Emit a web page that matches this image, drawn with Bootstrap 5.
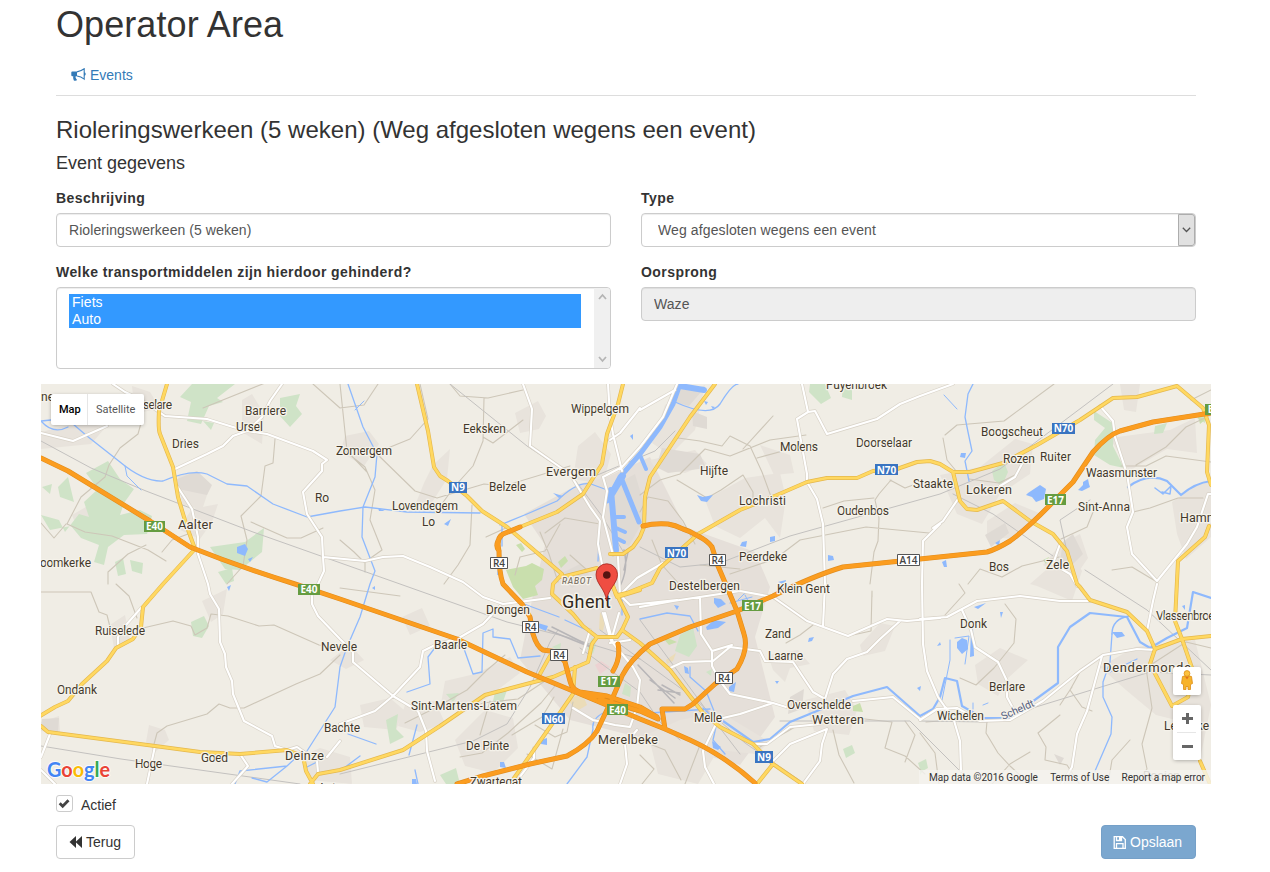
<!DOCTYPE html>
<html lang="nl">
<head>
<meta charset="utf-8">
<meta name="viewport" content="width=device-width, initial-scale=1">
<title>Operator Area</title>
<link href="https://cdn.jsdelivr.net/npm/bootstrap@5.3.0/dist/css/bootstrap.min.css" rel="stylesheet">
<style>
body{font-family:"Liberation Sans",Arial,sans-serif;font-size:14px;line-height:20px;color:#333;background:#fff;padding-right:18px;overflow:hidden}
.page{width:1170px;max-width:none;padding:0 15px}
h1,h2,h3{font-weight:400;line-height:1.1;margin:0}
h1{font-size:36px;padding-top:5px;height:55px;letter-spacing:.08px}
h2{font-size:24px;padding-top:21px;height:57px}
h3{font-size:18px;height:35px;padding-top:1px}
.nav-tabs{border-bottom:1px solid #ddd;height:41px}
.nav-tabs .nav-link{color:#337ab7;padding:10px 15px;border:0;line-height:20px}
.gx-wide{--bs-gutter-x:30px}
.form-label{font-weight:700;margin:0 0 5px;display:block;letter-spacing:.43px}
.field{margin-bottom:15px}
.form-control,.form-select{font-size:14px;line-height:20px;height:34px;color:#555;padding:6px 12px;border:1px solid #ccc;border-radius:4px;box-shadow:inset 0 1px 1px rgba(0,0,0,.075);letter-spacing:.07px}
.form-control:disabled{background:#eee;opacity:1}
.form-select{background-image:none;padding:6px 16px;letter-spacing:.11px}
.arrow{right:1px;top:1px;width:17px;height:32px;background:#e1e1e1;border:1px solid #adadad;border-radius:0 3px 3px 0}
.listbox{height:82px;padding:0;overflow:hidden}
.options{margin:6px 13px 0 12px;flex:1}
.options div{background:#39f;color:#fff;height:17px;line-height:17px;padding-left:3px}
.scrollbar{width:16px;background:#f0f0f0;padding:5px 0}
.map{height:400px;margin:0 -15px;background:#f0ede5;overflow:hidden}
.map>svg{display:block}
.road path{fill:none;stroke-linejoin:round;stroke-linecap:round}
.lbl text{font-family:Roboto,sans-serif;font-size:12px;fill:#43392c;stroke:#f5f2ea;stroke-width:2.5px;stroke-linejoin:round;paint-order:stroke}
.shield text{font:700 10px "Open Sans",sans-serif;text-anchor:middle;fill:#fff}
.shield .ring{fill:#444;font-weight:600}
.logo text{font-family:Lato,sans-serif;font-weight:700;font-size:20.5px;stroke:#fff;stroke-opacity:.75;stroke-width:2px;paint-order:stroke}
.mapctl{background:#fff;border-radius:2px;box-shadow:0 1px 4px -1px rgba(0,0,0,.4);font-family:Roboto,sans-serif;font-size:11px}
.maptype{left:10px;top:10px;height:31px;line-height:31px}
.maptype .on{width:37px;color:#000;font-weight:500;border-right:1px solid #e6e6e6;padding:0 0 0 8px}
.maptype .off{width:56px;color:#565656;padding:0 0 0 8px}
.pegman{left:1132px;top:283px;width:28px;height:28px}
.zoomer{left:1132px;top:321px;width:28px;height:55px}
.credits{right:0;bottom:0;height:14px;background:rgba(245,243,239,.78);font:10px/16px Roboto,sans-serif;color:#333;padding:0 6px;width:292px;white-space:nowrap}
.active-row{height:41px;padding-top:11px}
.active-row .form-check-input{width:17px;height:17px;margin:0 8px 0 0;border:1px solid #ccc;border-radius:3px;background:#fff url("data:image/svg+xml,%3Csvg xmlns='http://www.w3.org/2000/svg' viewBox='0 0 17 17'%3E%3Cpath d='M3.700 8.300l3 3 5.800-6' fill='none' stroke='%23444' stroke-width='2.800'/%3E%3C/svg%3E") center/17px no-repeat}
.btn{font-size:14px;line-height:20px;padding:6px 12px;height:34px;border-radius:4px;display:flex;align-items:center;gap:3px}
.btn-back{border:1px solid #ccc;background:#fff;color:#333;width:79px}
.btn-save,.btn-save:disabled{background:#7ba7cf;border:1px solid #75a0c8;color:#fff;opacity:1;width:95px;padding-left:11px}
</style>
</head>
<body>
<div class="container page">
<h1>Operator Area</h1>
<ul class="nav nav-tabs">
<li class="nav-item"><a class="nav-link d-flex align-items-center" href="#"><svg width="15" height="14" viewBox="0 0 15 14" class="me-1" aria-hidden="true"><path d="M.3 4.500Q.3 3.500 1.300 3.500H6v4.800H4.700c-.6 1.200.4 2.500 1.400 3.800-.7 1-2.500.9-3.200.4-.5-1.300-1-2.600-.6-4.200h-1Q.3 8.300.3 7.300z" fill="#337ab7"/><path d="M6 3.900C9 3.600 11.500 2 13.200.8v10.400C11.500 9.800 9 8.400 6 8M13.400 4.700q1.500 1.200 0 2.600" fill="none" stroke="#337ab7" stroke-width="1.100"/></svg>Events</a></li>
</ul>
<h2>Rioleringswerkeen (5 weken) (Weg afgesloten wegens een event)</h2>
<h3>Event gegevens</h3>
<div class="row gx-wide">
<div class="col-6">
<div class="field"><label class="form-label" for="desc">Beschrijving</label><input id="desc" class="form-control" value="Rioleringswerkeen (5 weken)"></div>
<div class="field"><span class="form-label">Welke transportmiddelen zijn hierdoor gehinderd?</span>
<div class="form-control listbox d-flex" role="listbox"><div class="options"><div>Fiets</div><div>Auto</div></div>
<div class="scrollbar d-flex flex-column justify-content-between align-items-center"><svg width="9" height="7"><path d="M1 6l3.500-4L8 6" fill="none" stroke="#b5b5b5" stroke-width="1.800"/></svg><svg width="9" height="7"><path d="M1 1l3.500 4L8 1" fill="none" stroke="#b5b5b5" stroke-width="1.800"/></svg></div></div></div>
</div>
<div class="col-6">
<div class="field"><label class="form-label" for="type">Type</label><div class="position-relative"><select id="type" class="form-select"><option>Weg afgesloten wegens een event</option></select><span class="arrow position-absolute d-flex align-items-center justify-content-center pe-none"><svg width="9" height="6"><path d="M.8.8l3.700 3.700L8.200.8" fill="none" stroke="#555" stroke-width="1.300"/></svg></span></div></div>
<div class="field"><label class="form-label" for="src">Oorsprong</label><input id="src" class="form-control" value="Waze" disabled></div>
</div>
</div>
<div class="map position-relative">
<svg width="1170" height="400" viewBox="41 384 1170 400">
<!-- built-up areas -->
<g fill="#e8e3dc">
<path d="M41 432l40-10 25 5-15 17-50 5zM132 386l18 6 10 16-25 6zM178 475l18-3 14 14-8 24-20-6zM192 509l26-5-6 18-12 17-22-10zM242 400l10-6 12 20-2 30-20-12zM345 436l24-5 10 13-15 22-24-14zM433 465l17-16-3 30-18 28-13-4 8-20zM515 413l23-12 8 15-7 13-19 4zM578 446l17-14 16 22-8 30-30-5z"/>
<path fill="#e5dfd9" d="M524 514l55-30 28-7 43-20 35 70 70 25 15 35-15 50 20 80-35 48-70-20-100-25-50-60 15-75 10-40z"/>
<path d="M705 500l40-22 35-5 6 25-6 40-15-20-25 20-25-12zM665 405l40-20-10 45-25 25-18-12zM650 460l45-10 12 14-22 9-30-5z"/>
<path d="M940 475l40-8 35-28 18 5-3 30-30 20-18 30-25-10zM987 521l28-18 24 10-22 26-30-2zM1110 438l60-8 25-12 2 35-30-4-38 22zM1172 502l30-20 9 0v55l-25 22-9-25zM1060 545l20-11 8 24-15 22-30-15zM1030 584l40-35 12 22-10 30-35-15zM1120 384l20 0-4 28-12-2z"/>
<path d="M975 665l25-17 28 12-20 18-10 18-20-12zM1100 667l35-20 60-7 16 65-10 50-25-35-20-5-30-25zM860 645l20-22 15 3-10 25-22 5zM768 655l30-5 12 14-20 4-5 14-12-12zM805 700l40-10 12 20-8 25-35-4zM680 720l40-8 50 30-14 12-38-4-20 34-40-10-10-40zM405 705l30-4 10 22-25 9-22-6zM455 740l30-30 28 8 5 30-25 25-28-7zM360 705l30-7 14 12-8 20-32-3zM300 757l20-9 30 9 2 27-42-4zM41 722l18-6 1 17-19-2zM110 625l15-10 5 25-16 8zM202 601l25-12-4 25-12 8zM149 725l16 5 4 10-14 12-9-10zM72 515l26-15 14 8-10 12-25 8zM445 681l30-7 35-17 10 16-40 30-40 6zM402 617l20-9 8 18-20 9zM330 660l20-15 14 15-18 9zM760 445l30 10 4 18-20 2z"/>
</g>
<g fill="#dfdad4"><path d="M177 479l20-8 15 14-5 10-29-6zM679 388l22 4-12 14-18-5zM692 411l15 6v12l-14-3zM662 448l38 6 6 14-38 5-12-6zM985 535l20-12 4 10-18 14zM1063 542l10-8 10 20-15 15-8-8zM560 574l20-10 10 12-18 12zM790 697l14-8-2 20-14 5zM42 719l17-1-1 13-17-2zM610 488l25-14 12 40-18 32-14-6zM1054 754l10 4-4 7z"/></g>
<!-- parks and woods -->
<g fill="#cfe3c7">
<path d="M192 384h43l-18 14 6 4-14 4-8 18-14-3 4-19-11-5zM280 398l20-4-4 12 6 8-12 13-10-11zM203 421l11 2-3 7zM41 515l18 5 6 12 14-18 10 3-5-15 14-13-12-16 22-12 12 18 14 10-10 14-4 12 20-5 12 6-5 18-23 1-16 12-4 18-10-3 5-17-18-7-10-12-21 4zM58 487l10-10 6 25-14-5zM210 547l35-5 19-14-2 24-22 18-15-1zM42 487l10-3-2 10zM115 562l8-4 3 16-8 2zM130 560l13 3-1 11-10-3zM195 620l10 10-6 4zM218 572l14-4 2 13-8 3z"/>
<path d="M810 384h15l6 14-10 6-12-12zM843 384h9v16l-10-3zM1094 411l20 13-1 22 11 22-14-3-16-10 1-15 10-12-11-8zM992 471l12-9 4 10-6 14-8-6zM1155 426l12-3-4 10-9 1zM1197 418l8-2v7zM680 635l13-8 4 19-8 11-14-6zM386 720l12-6-2 15 8 8-14 7zM193 622l10-3 4 10-9 5zM446 694l13-1-6 9zM440 775l16-7 4 16h-14zM495 692l12-2-4 12-10-1zM592 637l4 8-3 9-6-5zM625 683l6 4-1 10-8-3zM843 749l9-4 3 8-9 5zM918 763l8-4 2 9-7 4zM920 764l6 3-6 8zM706 672l6-3-1 7zM552 647l9-4-1 8z"/>
<path d="M191 622l13-6 5 10-7 12-9-2z"/>
</g>
<g fill="#c9dfad"><path d="M506 570l20-4 6-3 12 6-2 11-7 6 3 9-15 4-10-12zM516 545l5-2 4 6-3 3zM558 562l7-6 3 5-7 7zM662 637l8 2 7 3-8 3zM853 706l7-3 3 9-10-1zM1043 560l6-3-3 7zM1198 417l8 2-6 5z"/></g>
<g fill="#ebdcb8"><path d="M568 700l14-7 5 12-10 6zM600 612l5 9-2 10-4-2zM666 660l10-7-3 8-6 3z"/></g>
<path d="M595 665l6-4 9 6-10 7z" fill="#ecd2d2"/>
<!-- minor roads -->
<g class="road" stroke="#cdc6b8" stroke-width="1.100">
<path d="M143 416l-5 18-18 14-11 17-4 12-24 20-14 27 18 8 27 4 36 14 18 11M66 524l-12 14-13-15M108 584l0-12 20-18 18-9M162 552l10-12 16-6M41 592h50l8 20 8 3 4 16M116 584l13 12 8 22M143 628l30-7 18 5 4 9 12-7 4-14 17 2 31 10 15-1 45 20 30 4M340 655l-20 19-24 10-52 24-14 0-11-4-12 10-40 12-10 7-4 15M275 439l-2 24-8 3-4 30-20 20 6 24-4 26-16 18M251 522l36 16h14l22-10M203 408l72-29M313 384l27 24 24-3 14-21M340 447l25 20 10 23-5 30 12 30-17 12 0 10M378 452l32-13 18-20-8-35M375 452l40 39 22 7 47-14 20 2 66-20M367 472l-20-21-7-67M484 398l-1 43-10 25-18 20-14 19M472 505l-2 40-12 20-14 19M450 384l10 12 28 2 35-8M483 437l10 6 30-23M508 527l-22 10M340 540l14 12 10 10M400 596l-60-8"/>
<path d="M640 495l20-15 20-6 25-25 25 7 40-16 36-5M750 446l-20-10-8 10-22-5-22-3M750 446l12 26 11 30M757 458l48-13M773 416l-30 33M677 480l30 18 14-8 22-15 10 17v10M640 512l8-15 20 4 15 20 12 23M730 574l45-15 25-19 66-13 63 6M891 480l-12 14-4 6 4 18-1 23-4 11-4 32M823 508l21-7 30-3M890 480l15 8 16-6M1211 462l-45-6-20 10-25 0M945 435l12-10 47-4 50-37M943 438l4 22 10 12M1015 475l-16 8-30-4M1211 390l-20 10M1211 415l-25 12-20 20-30 18M1203 498l-25 0-28 10-17 4M1093 512l-6 15-26 12M968 584l12-15 22 8 20-11 37-9M1157 582l-25-15-20 3M945 615l20-22-6-9M1005 604l11 15-2 24-20 25-18 17-16-7M1211 648l-25-6-40 26 6 40-10 36 5 25-13 15"/>
<path d="M940 721l-14 1M1080 672l-10 18 12 17 10 4M1060 715l-22 18 8 14-1 13 22 5 13 20M987 721l-1 12 12 20 12 13 20 18M1030 752l-20 12-18 20M1060 705l12-18M1130 740l-18 20-4 24M920 733l15 20 4 31M560 524l-15 27-25 6-5 18M540 532l9 22 9 28M570 555l17 15M600 524l-35-6-20 15M652 540l10 25 18 20M700 565l40 4M786 643l14-8 13-10M872 597l0-6-1 40-23 5M405 723l30-15 32-18 20-20 18-15M455 715l28-12 35-4 30-20M555 686l-14 17-20 18-13 12-26 20-22 4M512 735l30-18 12-20M573 702l-6 30-12 5-20-12M480 735l10-34M527 754l25 15 11-40M640 740l25 10 16 30M640 755l14 14-12 15M700 745l-15 39M795 727l-35 20M833 730l6 25 15 28M847 717l45 5-7 26 20 8 20 18M905 721l10 14-10 27"/>
</g>
<!-- railways -->
<g class="road" stroke="#c3c1bf" stroke-width="1">
<path d="M41 441l50 27 55 23 107 41 147 52 107 38 60 15 73 22M340 774l133-33 34-17 23-37 20-45 8-12M640 547l40 20 40-4 70-27 150-42 60-25 113-85M953 494l40 20 60 42M450 384l77 62 45 30 30 40 22 37M41 746l80 13 179 25M920 721l67 1 163-50 61 3M600 630l90 65 55 48 60 41M580 648l60 44 20 30 20 18M595 476l60-25 20-20M780 721h130l60 60M640 620l70 95 30 39M1070 565l-10-45 30-20M1085 570l62 40 64 60"/>
</g>
<g class="road" stroke="#b8b6b8" stroke-width="1.500"><path d="M624 550q5 20-5 38M628 552l-4 18M548 630l45 18M552 627l40 20M650 680l25 18M662 685l18 10M658 690l22 3M638 665l36 38"/></g>
<!-- water -->
<g class="road" stroke="#8eb9fd" stroke-width="1.300">
<path d="M41 421l20-2 12 5 14 12 33 26q24 20 43 19 27-12 44-7l20 10 20 2 26 18 34 13 33-6 25-4 42 5 73 1M41 421q12 14 27 6M348 384l15 43 14 27-2 23-12 30-1 30 13 34-5 13-10 33-13 30-7 20-5 40-28 44M502 526v20M500 525l27-11 30-13q20-20 34-17l19 7" />
<path d="M675 402q35 16 45 2 12-20 18-20M407 692l23-8-2-27 9-12 26 1 10 28 9-2 1-39 10-4v8l17 2 8 19 22-2M235 784l5-13 47-5 16-15M287 766l-20 16-15-4M305 768l12-6M340 771l20-15M415 770l3 14M607 711q-16 7-14 18l-6 28-20 27M640 619l27-6 23 3 8 15M690 667l0 10 16 14 8 20M650 713l60-4M703 708l14 14-4 18 12 14M973 384l-5 10-3 23 3 15 4 19-7 10 4 20M1112 634l-2 28-7 20 0 15 9 20-1 17-16 37M1110 672l27-13M565 620l30 14M524 604l35 13M600 521l-2 40M622 595l0 20M417 725l-8 30M348 734l28 10"/>
</g>
<g class="road" stroke="#8eb9fd" stroke-width="2.200"><path d="M723 721l30 21 17-3 20-17 27-11 36-15 34-9 33 29 13-7 7-12 5-19 12 3 5 25 21 12h27l48-35v-36l12-20 20-14 37 4 13 25 10 6 17-10 20-10 6-36 18 6M1128 487q20-15 39-6l14 14q14-12 30-14"/><path d="M1155 488l8 6 8-8-1 8-8-2M1112 634q0-15 17-18" stroke-width="1.500"/></g>
<g class="road" stroke="#8eb9fd"><path d="M680 384l-7 20-13 23-20 27-20 23-13 24" stroke-width="5"/><path d="M680 386l24 4M611 490l5 60M623 476l-12 20" stroke-width="6"/><path d="M622 480l17 42" stroke-width="5"/><path d="M616 517h8M616 528l9 4M616 538l8 4M640 455l6 14" stroke-width="4"/></g>
<g fill="#8eb9fd"><path d="M237 547l8-3 3 5-3 7-8-3zM248 559l5-2-3 5zM444 524l7-5-3 7zM553 493l10 3-4 2zM697 495l6 2 10-2-6 7-6-1zM742 542l5-1-1 6-6-1zM770 537l5-1v5l-5 1zM828 555l5 1 1 4-6 1zM778 582l8-2-1 5zM1028 493l12-8 6 4-2 10-8 3-4-5-6-2zM1083 482l5-3 1 5 1 3-8 4-4-1 5-5zM961 453l5 0-1 5-5-1zM995 543l5-3-1 6zM942 562l4-2 1 7-3 0zM957 642l5-4 5 2 1 9-6 5-5-6zM971 628l2 0 1 28-4 1zM940 642l-3 4 4-1zM974 607l12-4-8 6zM1112 632l10 0 3 4-8 2zM1000 612l3 0-2 6zM714 598l7 1 5 5-8 4-4-5zM706 627l8-7 12 2-8 6-11 2zM674 605l5 1-2 4zM684 666l4 2 1 6-4-1zM729 687l7-5-2 10-5-1zM809 638l5-1-2 4-4 1zM775 681l4 0-2 3zM917 688l4-2-1 5zM712 741l9 6-3 3-5-2zM541 740l6-2v7l-6-1zM500 762l4 0 2 6-6-1zM412 779l4 0 1 5h-5zM372 588l3-2 0 4zM538 623l10 3-2 5-7-3zM227 587l4-2-2 6zM1182 606l3-1 0 5zM630 436l3-2 0 6zM704 401l4 1-2 3zM711 406l4 1-2 2zM56 422l14 1-6 2zM498 568l2 6-3 1zM378 508l7 3-6 0z"/></g>
<g class="road" stroke="#8eb9fd" stroke-width="1"><path d="M355 410l9-9M730 603l22-6M742 610l7-4M745 595l3 6M738 600l8-8M125 466l2 10 14 14M944 395l13 14M973 703v6M983 705l5-2M955 638l14-2-4 28M950 640v20l-8 40"/></g>
<!-- white roads: casing, then surface -->
<g class="road"><g stroke="#d8d2c7" stroke-width="3.400"><path id="w1" d="M113 384l12 8 15 7 25 17 42 3 26 8 14 4 20 3 46 17 14 9-5 4v7l-19 21 4 22 15 23 1 20 1 14-6 13M312 596v8l6 12 22 23 13 13v10l40 34 25 15 8 20 1 20 8 30M175 469l32-15 16-8 10-10 14-5 15-14 8-16 12-17M41 433l32 8 34-15M177 486l15 23 6 28v17l10 30 2 10 9 15 1 33 5 12 1 13 6 14 1 13 11 27 28 15 3 10 12 4 10-3 20 14 1 11M323 557l42 4 18-4 20-1 27 11 33 15 20 15 20 7 47-6M340 724l35-13 18-15 27-29 3-16 14-7 20-5 26-15 17-18M523 384l9 25-2 37 40 28 20 33 10 14-2 23 4 20M608 384l2 33 3 17 9 37M677 384l-14 33-23 30-18 20-19 10 4 14-4 26 10 38M640 408l-20 25-10 7M640 410l35-20"/><path id="w2" d="M802 384l6 28-11 7 10 55v8l10 17 6 25 2 60-2 42M808 412l7-1 12 23 50-15 23-15 20-8 33-12M940 524l-17 17-1 43 1 60 4 27 11 26 7 10 8 10 7 24 1 30M958 499l-15 22-10 7M1100 406l13 15 2 16 12 37 6 38-6 15 5 27 25 27 30-37 10-17 11-33h3M1157 584l-4 17-6 30M1000 486l15-9 8-15M1060 544l-7 20 17 10 7 12M920 619l27-2 30-16 43-5 40 5 30 0M962 610l9 20 4 17 23 15 9 19 0 16 8 15M920 720l17-11 20-1 23 13 30-1 33-19 37-30 23-16 34-6 18 1M1102 656l-15 55-10 23-5 33-10 17"/><path id="w3" d="M640 607l33-6 67-10 33 6 34 24 41 15 39-17 20 2 33-3M900 621l-20 18-13 13-20 7-14 15-8 25M700 597l1 37 11 17v15l8 15 10 13 43 9 13 4M668 669l15-7 30-1 17-14 30 4 5 10 28 1 20 30 12 7M712 651l20-6M710 721l30-7 33-11M753 744l14 0 23-17 30-3M853 701l40-4 27 22M773 761l17-17 37-15-5 15-2 17-17 23M715 726l-12 25 2 16 9 17M155 746l-8 38M50 734l-9 23M240 754l8 12-16 18M141 608l-15 17-8 12v10M327 757l13-16M41 770l14 14M620 595l10 10 47-5M620 595l17-17 26-15M618 557l2 38M605 613l8 30 20 24 7 13-3 27-7 20-15-2-22-5-20-12M590 630l-7 23M603 613l8 28 8-28M534 748v10l-15 20M630 640l-20 3M637 730l-12 14 2 20-7 20"/></g>
<g stroke="#fff" stroke-width="2.100"><use href="#w1"/><use href="#w2"/><use href="#w3"/></g>
<g stroke="#e5b84d" stroke-width="4"><path id="y1" d="M167 384l-8 27q-1 18 1 23l13 33 5 30 9 30 8 22-32 35-20 23-2 20-8 12-17 9-9 13-25 23-14 17-13 6-15 9M41 726l7 6 107 14 45 6 40 2 47-4 16 6 3 15 7 13M310 784l8-10 22-4 63-20 37-24 45-31 68-18 35-15 4-18 5-7h20l5-7 6-13-10-20-5-10M417 384l11 47 6 36 6 9 8 5 19 15 15 15 25 16 55 47-9 10-1 10 21 20 10 12 14 11M562 577l35-9M623 384l-5 20-11 30-5 30-19 30-26 18-37 15M715 384l-25 33-40 60-5 20-1 30-4 10-7 10-10 7h-13"/><path id="y2" d="M617 597l5-2 30-12 8-15 38-34 42-24 37-15 30-13 20-4h30l16-7 24-2 20-7 13-1 10 3 13 8h17l33-9 34-18 43-25 33-22 24-1 40-11 26 22 6 17-2 47 4 13M953 472l7 29 7 8 10 1 26-9 27 20 23 13 14 17 10 33 3 3 10 13 37 12 20 19 8 18-5 15 22 42 16-9 5-26-11-32-7-18 3-60 27-24 4-11M1155 649l27-10 29-3M1200 761l10 23M622 630l18 13 30 27 33 43 17 14 33 17 20 20 29 20M773 764l-16 20M575 667l-2 27-16 23-45 64M550 656l-10 18M617 597l23-7M640 590l-22 5M612 583l4 12"/></g>
<g stroke="#ffd861" stroke-width="2.700"><use href="#y1"/><use href="#y2"/></g>
<g stroke="#e18c1d" stroke-width="5"><path id="m1" d="M41 458l27 13 82 50 40 26q50 20 105 37l45 15 117 40 70 33 46 19 67 28 25 10 25 11q35 16 65 43M573 691q20 3 34 5l33 11 17 10M600 699l40 12 18 8M665 729l-3-20h23l8-5 22-20 22-15q12-20 7-35l-7-23-8-19-11-26-6-19q-4-6-14-11-8-5-15-7-8-4-15-5-14-1-25 2M1211 413l-58 9-33 9q-12 4-27 21l-20 30-20 20q-25 26-43 39-13 8-23 11l-67 7-77 8q-30 9-70 29l-36 15-47 16-40 17q-20 16-28 32l-9 21-16 34q-8 13-30 25l-37 8-47 12-26 8M618 644q3 14-5 27M520 527l-17 7q-7 4-4 17 0 22 4 33l19 20 8 13 3 17q4 13 10 16l14 2 8 10 5 19q2 8 8 10 8 5 25 6M501 536q-7 9-2 15"/></g>
<use href="#m1" stroke="#fb9d20" stroke-width="3.900"/>
</g>
<!-- road shields -->
<g class="shield">
<g fill="#659c41"><path d="M144 521h21v11h-21zM298 584h22v11h-22zM598 676h22v11h-22zM607 704h21v11h-21zM742 600h21v11h-21zM1045 494h21v11h-21zM1205 404h6v11h-6z"/></g>
<g fill="#3974c1"><path d="M449 482h18v11h-18zM542 713h23v11h-23zM665 547h23v11h-23zM755 751h18v12h-18zM875 464h23v11h-23zM1052 423h23v11h-23z"/></g>
<g fill="#fff" stroke="#555" stroke-width="1"><path d="M490.500 557.500h17v11h-17zM522.500 621.500h16v11h-16zM550.500 649.500h17v11h-17zM709.500 554.500h16v11h-16zM715.500 672.500h17v11h-17zM897.500 554.500h22v11h-22z"/></g>
<text x="154.500" y="530">E40</text><text x="309" y="593">E40</text><text x="609" y="685">E17</text><text x="617.500" y="713.500">E40</text><text x="752.500" y="609.500">E17</text><text x="1055.500" y="503.500">E17</text><text x="1210.500" y="413">E</text>
<text x="458" y="491">N9</text><text x="553.500" y="722.500">N60</text><text x="676.500" y="556.500">N70</text><text x="764" y="760.500">N9</text><text x="886.500" y="473.500">N70</text><text x="1063.500" y="432">N70</text>
<text class="ring" x="499" y="567">R4</text><text class="ring" x="530.500" y="631">R4</text><text class="ring" x="559" y="659">R4</text><text class="ring" x="717.500" y="564">R4</text><text class="ring" x="724" y="682">R4</text><text class="ring" x="908.500" y="564">A14</text>
</g>
<!-- place names -->
<g class="lbl">
<text x="41" y="401">ne</text><text x="143" y="409" textLength="29">selare</text><text x="245" y="415" textLength="41">Barriere</text><text x="236" y="431" textLength="27">Ursel</text><text x="172" y="448" textLength="27">Dries</text><text x="336" y="455" textLength="56">Zomergem</text><text x="315" y="502" textLength="14">Ro</text><text x="178" y="529" textLength="35" style="font-size:13px">Aalter</text><text x="40" y="567" textLength="51">oomkerke</text>
<text x="571" y="413" textLength="58">Wippelgem</text><text x="463" y="433" textLength="43">Eeksken</text><text x="546" y="476" textLength="50" style="font-size:12.500px">Evergem</text><text x="489" y="491" textLength="37">Belzele</text><text x="392" y="510" textLength="66">Lovendegem</text><text x="422" y="526" textLength="13">Lo</text>
<text x="826" y="389" textLength="61">Puyenbroek</text><text x="780" y="451" textLength="38">Molens</text><text x="856" y="447" textLength="56">Doorselaar</text><text x="700" y="475" textLength="28">Hijfte</text><text x="739" y="505" textLength="47">Lochristi</text><text x="837" y="515" textLength="52">Oudenbos</text><text x="739" y="561" textLength="48">Peerdeke</text><text x="913" y="488" textLength="40">Staakte</text>
<text x="981" y="436" textLength="62">Boogscheut</text><text x="1003" y="463" textLength="32">Rozen</text><text x="1040" y="461" textLength="31">Ruiter</text><text x="1086" y="477" textLength="71">Waasmunster</text><text x="966" y="494" textLength="46" style="font-size:12.500px">Lokeren</text><text x="1078" y="511" textLength="52">Sint-Anna</text><text x="1180" y="522" style="font-size:12.500px">Hamme</text><text x="989" y="571" textLength="20">Bos</text><text x="1046" y="569" textLength="23">Zele</text>
<text x="669" y="590" textLength="71">Destelbergen</text><text x="777" y="593" textLength="53">Klein Gent</text><text x="765" y="638" textLength="26">Zand</text><text x="768" y="660" textLength="35">Laarne</text><text x="787" y="709" textLength="64">Overschelde</text><text x="812" y="724" textLength="52" style="font-size:12.500px">Wetteren</text><text x="694" y="722" textLength="28">Melle</text><text x="598" y="744" textLength="60" style="font-size:12.500px">Merelbeke</text>
<text x="95" y="635" textLength="50">Ruiselede</text><text x="57" y="694" textLength="40">Ondank</text><text x="321" y="651" textLength="36">Nevele</text><text x="324" y="732" textLength="36">Bachte</text><text x="285" y="760" textLength="39" style="font-size:12.500px">Deinze</text><text x="201" y="762" textLength="27">Goed</text><text x="135" y="768" textLength="27">Hoge</text><text x="486" y="614" textLength="44">Drongen</text><text x="434" y="649" textLength="33">Baarle</text><text x="411" y="710" textLength="106">Sint-Martens-Latem</text><text x="466" y="750" textLength="43">De Pinte</text><text x="470" y="786" textLength="52">Zwartegat</text><text x="318" y="792">Astene</text>
<text x="960" y="628" textLength="27">Donk</text><text x="989" y="691" textLength="36">Berlare</text><text x="937" y="720" textLength="47">Wichelen</text><text x="1103" y="672" textLength="88" style="font-size:13px">Dendermonde</text><text x="1156" y="620" textLength="64">Vlassenbroek</text><text x="1164" y="730" textLength="45">Lebbeke</text><text x="1143" y="780" opacity=".6">Rooien</text>
<text x="1003" y="720" transform="rotate(-24 1003 720)" style="font-size:10.500px;fill:#546080">Scheldt</text>
<text x="562" y="584" textLength="29" style="font-size:8.500px;font-style:italic;font-weight:500;fill:#81776a">RABOT</text><text x="562" y="607.500" textLength="49" style="font-size:18px;fill:#302820;stroke-width:3px">Ghent</text>
</g>
<!-- marker -->
<path d="M606.500 601c-1-12-10.500-17-10.500-26.500a10.750 10.750 0 0 1 21.500 0c0 9.500-10 14.500-11 26.500z" fill="#ef4d42" stroke="#a3241c" stroke-width=".8"/><circle cx="606.800" cy="575" r="3.800" fill="#561410"/>
<g class="logo"><text x="47" y="777" textLength="63" lengthAdjust="spacingAndGlyphs"><tspan fill="#4285f4">G</tspan><tspan fill="#ea4335">o</tspan><tspan fill="#fbbc05">o</tspan><tspan fill="#4285f4">g</tspan><tspan fill="#34a853">l</tspan><tspan fill="#ea4335">e</tspan></text></g>
</svg>
<div class="mapctl maptype position-absolute d-flex"><span class="on">Map</span><span class="off">Satellite</span></div>
<div class="credits position-absolute d-flex justify-content-between"><span class="ms-1">Map data ©2016 Google</span><span>Terms of Use</span><span>Report a map error</span></div>
<div class="mapctl pegman position-absolute"><svg class="d-block" width="28" height="28"><path d="M9.500 9.500q4.500-2 9 0l1 7-2 1v5h-2.500v-3h-2v3h-2.500v-5l-2-1z" fill="#f7b32b" stroke="#dc8d16" stroke-width=".8"/><path d="M12 9.500l2 3 2-3" fill="#e3711d"/><circle cx="14" cy="6.500" r="2.900" fill="#fdc23e" stroke="#dc8d16" stroke-width=".8"/></svg></div>
<div class="mapctl zoomer position-absolute"><svg class="d-block" width="28" height="55"><path d="M9 13.500h11M14.500 8v11M9 41.500h11" stroke="#666" stroke-width="3"/><path d="M4 27.500h19" stroke="#e6e6e6"/></svg></div>
</div>
<div class="active-row d-flex"><input class="form-check-input" type="checkbox" checked id="act"><label for="act">Actief</label></div>
<div class="d-flex justify-content-between">
<button class="btn btn-back" type="button"><svg width="14" height="12" aria-hidden="true" viewBox="0 0 14 12"><path d="M7 0v12L.5 6zM13 0v12L6.500 6z" fill="#333"/></svg>Terug</button>
<button class="btn btn-save" type="button" disabled><svg width="14" height="13" viewBox="0 0 14 13" aria-hidden="true"><path d="M1.200.700h8.300l2.800 2.800v8.800H1.200zM3.500.7v3.800h5V.7M3.500 12V7.700h6.500V12" fill="none" stroke="#fff" stroke-width="1.300"/><path d="M6 1h2v3H6z" fill="#fff"/></svg>Opslaan</button>
</div>
</div>
<script src="https://cdn.jsdelivr.net/npm/bootstrap@5.3.0/dist/js/bootstrap.bundle.min.js"></script>
</body>
</html>
